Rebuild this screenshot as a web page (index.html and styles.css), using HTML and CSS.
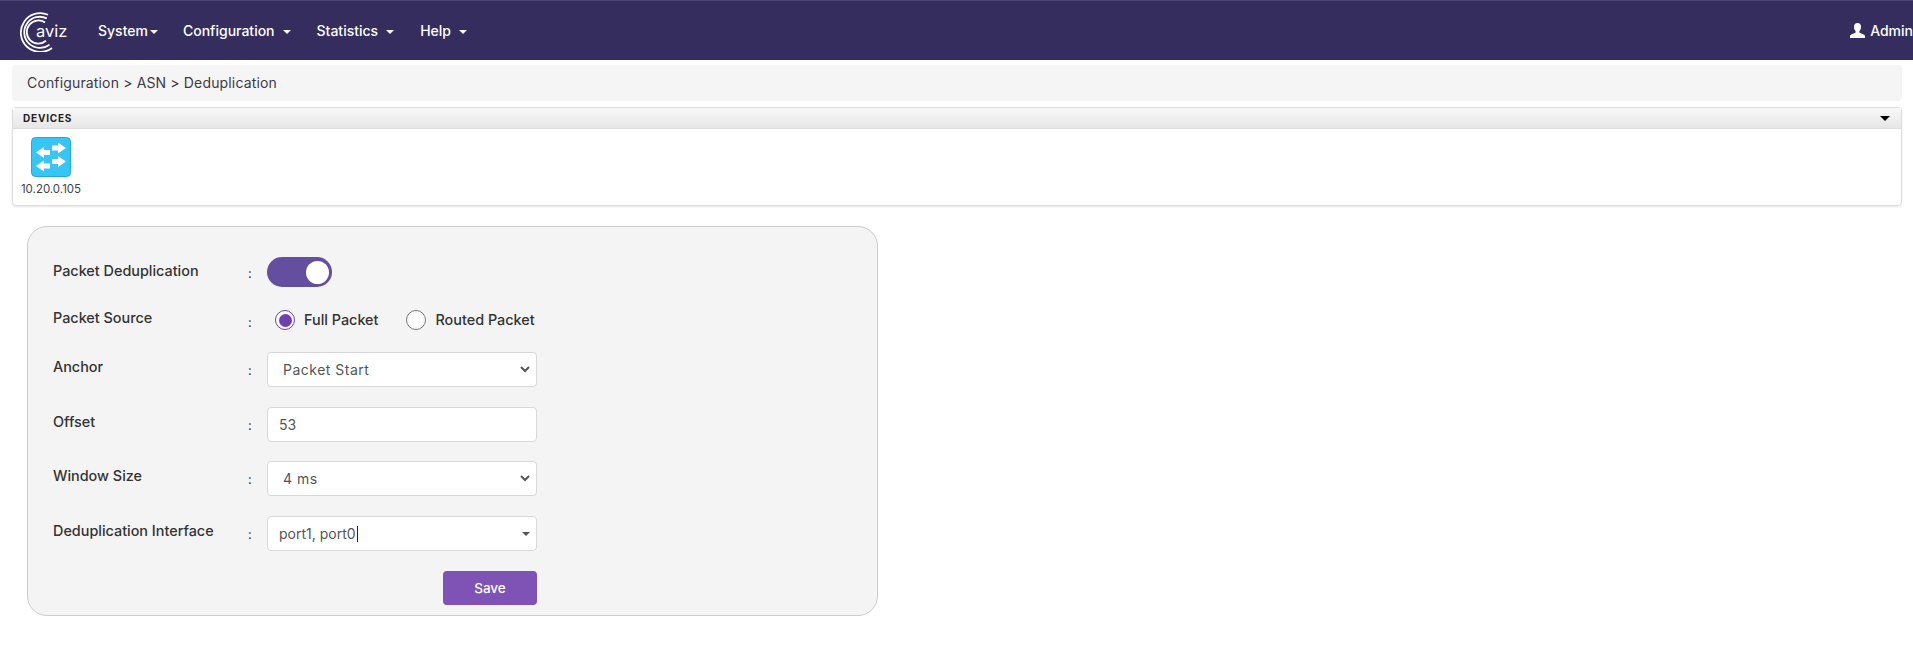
FILE: index.html
```html
<!DOCTYPE html>
<html lang="en">
  <head>
    <meta charset="utf-8">
    <title>Deduplication</title>
    <link rel="stylesheet" href="styles.css">
  </head>
  <body>

    <nav class="navbar">
      <svg class="logo" width="50" height="42" viewBox="0 0 50 42" fill="none" stroke="#fff" stroke-width="1.8">
        <path d="M30 4.800A19.400 19.400 0 1 0 34 38"/>
        <path d="M28.800 8.400A15.600 15.600 0 1 0 31.500 34.600"/>
        <path d="M27 12.500A11.600 11.600 0 1 0 28 30.800"/>
        <text class="logo-text" x="18" y="26.500">aviz</text>
      </svg>
      <ul class="menu">
        <li class="menu-tight">System<span class="caret"></span></li>
        <li>Configuration<span class="caret"></span></li>
        <li>Statistics<span class="caret"></span></li>
        <li>Help<span class="caret"></span></li>
      </ul>
      <div class="user">
        <svg width="15" height="15" viewBox="0 0 15 15" fill="#fff">
          <path d="M7.500 0C5.200 0 4 1.700 4 3.900c0 1.600.6 3.200 1.600 4.200v1.300C4 10.600 0 11.200 0 13v2h15v-2c0-1.800-4-2.400-5.600-3.600V8.100C10.400 7.100 11 5.500 11 3.900 11 1.700 9.800 0 7.500 0z"/>
        </svg>
        <span>Admin</span>
      </div>
    </nav>

    <div class="breadcrumb">Configuration &gt; ASN &gt; Deduplication</div>

    <section class="devices">
      <div class="devices-head">
        <span>DEVICES</span>
        <span class="devices-toggle"></span>
      </div>
      <div class="devices-body">
        <div class="device">
          <svg width="40" height="40" viewBox="0 0 40 40">
            <rect x="0.500" y="0.500" width="39" height="39" rx="4" fill="#36c6f6" stroke="#2aa5dc"/>
            <g fill="#fff">
              <path d="M5 15.500l8-5.500v3h6v5h-6v3z"/>
              <path d="M35 11l-8-5.500v3h-6v5h6v3z"/>
              <path d="M5 29l8-5.500v3h6v5h-6v3z"/>
              <path d="M35 24.500l-8-5.500v3h-6v5h6v3z"/>
            </g>
          </svg>
          <div class="device-name">10.20.0.105</div>
        </div>
      </div>
    </section>

    <form class="card">
      <div class="row row-toggle">
        <label>Packet Deduplication</label>
        <span class="colon">:</span>
        <span class="switch"><span class="knob"></span></span>
      </div>
      <div class="row row-radio">
        <label>Packet Source</label>
        <span class="colon">:</span>
        <div class="radios">
          <span class="radio on"></span><span class="radio-text">Full Packet</span>
          <span class="radio"></span><span class="radio-text">Routed Packet</span>
        </div>
      </div>
      <div class="row">
        <label>Anchor</label>
        <span class="colon">:</span>
        <select class="field field-select"><option>Packet Start</option></select>
      </div>
      <div class="row">
        <label>Offset</label>
        <span class="colon">:</span>
        <input class="field" type="text" value="53">
      </div>
      <div class="row">
        <label>Window Size</label>
        <span class="colon">:</span>
        <select class="field field-select"><option>4 ms</option></select>
      </div>
      <div class="row">
        <label>Deduplication Interface</label>
        <span class="colon">:</span>
        <div class="field multi">
          <span>port1, port0</span><span class="cursor"></span>
          <span class="multi-caret"></span>
        </div>
      </div>
      <div class="actions">
        <button class="save" type="button">Save</button>
      </div>
    </form>

  </body>
</html>
```

FILE: styles.css
```css
body {
  margin: 0;
  font-family: "Inter", "Open Sans", sans-serif;
  font-size: 14px;
  color: #333;
  background: #fff;
}

/* top bar */
.navbar {
  display: flex;
  align-items: center;
  height: 59px;
  border-top: 1px solid #4a4372;
  background: #352d5e;
  color: #fff;
}
.logo {
  margin-left: 18px;
  flex: none;
}
.logo-text {
  font-family: "Inter", sans-serif;
  font-size: 16.500px;
  fill: #fff;
  stroke: none;
}
.menu {
  display: flex;
  list-style: none;
  margin: 0 0 0 30px;
  padding: 0;
  font-weight: 500;
  font-size: 14px;
}
.menu li {
  margin-right: 26px;
}
.menu li.menu-tight {
  margin-right: 25px;
}
.caret {
  display: inline-block;
  margin-left: 8px;
  vertical-align: middle;
  border-top: 4px solid #fff;
  border-left: 4px solid transparent;
  border-right: 4px solid transparent;
}
.menu-tight .caret {
  margin-left: 2px;
}
.user {
  display: flex;
  align-items: center;
  gap: 5px;
  margin-left: auto;
  font-weight: 500;
  white-space: nowrap;
}

.breadcrumb {
  margin: 5px 11px 0 12px;
  height: 36px;
  line-height: 35px;
  padding-left: 15px;
  background: #f5f5f5;
  border-radius: 4px;
  color: #3d3a45;
  letter-spacing: 0.150px;
}

/* devices panel */
.devices {
  margin: 6px 11px 0 12px;
  height: 97px;
  border: 1px solid #ddd;
  border-radius: 4px;
  box-shadow: 0 1px 2px rgba(0, 0, 0, 0.100);
}
.devices-head {
  display: flex;
  justify-content: space-between;
  align-items: center;
  height: 20px;
  padding: 0 11px 0 10px;
  background: linear-gradient(#f8f8f8, #e6e6e6);
  border-bottom: 1px solid #ddd;
  font-size: 10px;
  font-weight: 700;
  letter-spacing: 0.800px;
  color: #222;
}
.devices-toggle {
  border-top: 5px solid #000;
  border-left: 5px solid transparent;
  border-right: 5px solid transparent;
}
.devices-body {
  padding: 8px 0 0 5px;
}
.device {
  display: flex;
  flex-direction: column;
  align-items: center;
  width: 66px;
}
.device-name {
  margin-top: 5px;
  font-size: 11.500px;
  color: #444;
  white-space: nowrap;
}

/* form card */
.card {
  box-sizing: border-box;
  width: 851px;
  height: 390px;
  margin: 20px 0 0 27px;
  padding: 30px 25px 0;
  background: #f4f4f4;
  border: 1px solid #ccc;
  border-radius: 20px;
}
.row {
  display: grid;
  grid-template-columns: 195px 19px 270px;
  height: 35px;
  margin-bottom: 19.700px;
}
.row label {
  font-weight: 500;
  font-size: 14.400px;
  padding-top: 6px;
  color: #333;
}
.colon {
  padding-top: 10px;
  font-size: 13px;
}
.row-toggle {
  height: 30px;
  margin-bottom: 18px;
}
.row-toggle label {
  padding-top: 5px;
}
.row-toggle .colon {
  padding-top: 8px;
}
.row-radio {
  height: 30px;
  margin-bottom: 17px;
}
.row-radio label {
  padding-top: 4px;
}
.row-radio .colon {
  padding-top: 9px;
}
.switch {
  display: flex;
  justify-content: flex-end;
  align-items: center;
  width: 65px;
  height: 30px;
  padding-right: 3px;
  box-sizing: border-box;
  border-radius: 15px;
  background: #634ea0;
}
.knob {
  width: 23px;
  height: 23px;
  border-radius: 50%;
  background: #fff;
}
.radios {
  display: flex;
  align-items: flex-start;
  padding: 5px 0 0 8px;
  white-space: nowrap;
}
.radio {
  box-sizing: border-box;
  display: flex;
  flex: none;
  align-items: center;
  justify-content: center;
  width: 20px;
  height: 20px;
  margin-right: 9px;
  background: #fff;
  border: 1px solid #777;
  border-radius: 50%;
}
.radio.on {
  border: 1.500px solid #7040b0;
}
.radio.on::after {
  content: "";
  width: 13px;
  height: 13px;
  border-radius: 50%;
  background: #7040b0;
}
.radio-text {
  margin-right: 28px;
  line-height: 20px;
  font-weight: 500;
  font-size: 14.400px;
}
.field {
  box-sizing: border-box;
  width: 270px;
  height: 35px;
  padding: 0 11px;
  background: #fff;
  border: 1px solid #d8d8d8;
  border-radius: 4px;
  font-family: inherit;
  font-size: 14px;
  color: #555;
}
.field-select {
  appearance: none;
  padding-left: 15px;
  letter-spacing: 0.500px;
  background: #fff url("data:image/svg+xml,%3Csvg xmlns='http://www.w3.org/2000/svg' width='10' height='7' fill='none' stroke='%23555' stroke-width='2'%3E%3Cpath d='M1 1l4 4 4-4'/%3E%3C/svg%3E") no-repeat right 6px center;
}
.multi {
  display: flex;
  align-items: center;
}
.cursor {
  width: 1px;
  height: 16px;
  margin-left: 1px;
  background: #222;
}
.multi-caret {
  margin-left: auto;
  margin-right: -5px;
  border-top: 4px solid #555;
  border-left: 4px solid transparent;
  border-right: 4px solid transparent;
}
.actions {
  display: flex;
  justify-content: flex-end;
  width: 484px;
}
.save {
  width: 94px;
  height: 34px;
  background: #7f53b5;
  color: #fff;
  border: 0;
  border-radius: 4px;
  font-family: inherit;
  font-size: 13.500px;
  font-weight: 500;
}
```
